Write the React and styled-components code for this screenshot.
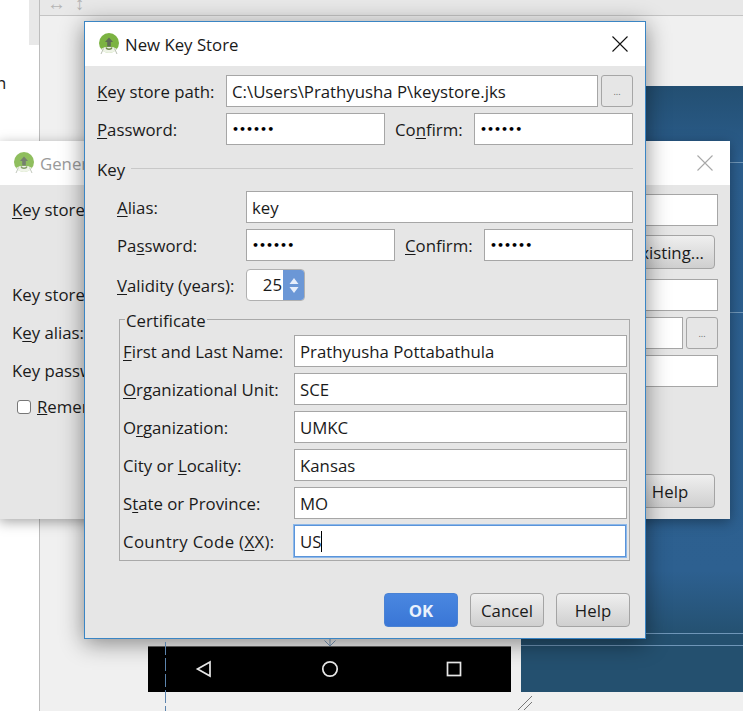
import React from 'react';
import styled, { createGlobalStyle } from 'styled-components';

const GlobalStyle = createGlobalStyle`
    html, body {
        margin: 0;
        height: 100%;
        overflow: hidden;
        background: #f0f0f0;
    }
    #root {
        height: 100%;
    }
    * {
        box-sizing: border-box;
    }
`;

const font = `"Open Sans", "Noto Sans", sans-serif`;

const StudioIcon = ({ size = 22, faded }) => (
    <svg width={size} height={size} viewBox="0 0 22 22" style={{ flex: 'none', opacity: faded ? 0.85 : 1 }}>
        <circle cx="11" cy="10" r="10" fill="#7cb342" />
        <path d="M3 16a10 10 0 0 0 16 0l-4-2H7z" fill="#eef3e6" />
        <path d="M11 4.5 15 9h-2.2v4.5H9.2V9H7z" fill="#5f6b57" />
        <path d="M8 14.5c1 2.4 5 2.4 6 0" fill="none" stroke="#6d8a4a" strokeWidth="1.6" />
        <path d="M5.5 15.5 3 21M16.5 15.5 19 21" stroke="#b9c0b2" strokeWidth="1" />
    </svg>
);

const CloseIcon = ({ color }) => (
    <svg width="16" height="16" viewBox="0 0 16 16">
        <path d="M0.5 0.5 15.5 15.5M15.5 0.5 0.5 15.5" stroke={color} strokeWidth="1.1" fill="none" />
    </svg>
);

const App = () => (
    <Page>
        <GlobalStyle />

        {/* IDE BEHIND THE DIALOGS */}
        <Ide>
            <SidePane>
                <SideScroll />
                <SideLetter>n</SideLetter>
            </SidePane>
            <Workspace>
                <Toolbar>
                    <ToolGlyph>↔</ToolGlyph>
                    <ToolGlyph>↕</ToolGlyph>
                </Toolbar>
                <Design>
                    <PhoneColumn>
                        <DashedGuide />
                        <AnchorArrow width="12" height="8" viewBox="0 0 12 8">
                            <path d="M6 0V8M0.5 2.5 6 8 11.5 2.5" stroke="#7f9dbd" strokeWidth="1" fill="none" />
                        </AnchorArrow>
                        <NavBar>
                            <svg width="18" height="18" viewBox="0 0 18 18">
                                <path d="M15 2 2.5 9 15 16z" fill="none" stroke="#e8e8e8" strokeWidth="1.7" />
                            </svg>
                            <svg width="18" height="18" viewBox="0 0 18 18">
                                <circle cx="9" cy="9" r="7.2" fill="none" stroke="#e8e8e8" strokeWidth="1.7" />
                            </svg>
                            <svg width="16" height="16" viewBox="0 0 16 16">
                                <rect x="1.5" y="1.5" width="13" height="13" fill="none" stroke="#e8e8e8" strokeWidth="1.7" />
                            </svg>
                        </NavBar>
                    </PhoneColumn>
                    <BluePanel>
                        <BlueLine $top={76} />
                        <BlueLine $top={226} />
                        <BlueLine $top={547} />
                        <BlueLine $top={559} />
                    </BluePanel>
                </Design>
                <ResizeGrip width="16" height="16" viewBox="0 0 16 16">
                    <path d="M1 15 15 1M7 15 15 7" stroke="#777" strokeWidth="1" fill="none" />
                </ResizeGrip>
            </Workspace>
        </Ide>

        {/* GENERATE SIGNED APK (BEHIND) */}
        <BackWindow>
            <TitleBar $back>
                <StudioIcon faded />
                <TitleText $muted>Generate Signed APK</TitleText>
                <CloseButton><CloseIcon color="#a8a8a8" /></CloseButton>
            </TitleBar>
            <BackBody>
                <BackRow $top={9}>
                    <BackLabel><u>K</u>ey store path:</BackLabel>
                    <Field />
                </BackRow>
                <BackButtons>
                    <PushButton $pad={10}>Choose existing...</PushButton>
                </BackButtons>
                <BackRow $top={10}>
                    <BackLabel>Key store password:</BackLabel>
                    <Field />
                </BackRow>
                <BackRow $top={6}>
                    <BackLabel>K<u>e</u>y alias:</BackLabel>
                    <Field />
                    <BrowseButton>...</BrowseButton>
                </BackRow>
                <BackRow $top={6}>
                    <BackLabel>Key password:</BackLabel>
                    <Field />
                </BackRow>
                <CheckRow>
                    <CheckBox />
                    <span><u>R</u>emember passwords</span>
                </CheckRow>
                <BackFooter>
                    <PushButton $width={90}>Help</PushButton>
                </BackFooter>
            </BackBody>
        </BackWindow>

        {/* NEW KEY STORE */}
        <FrontWindow>
            <TitleBar>
                <StudioIcon />
                <TitleText>New Key Store</TitleText>
                <CloseButton><CloseIcon color="#111" /></CloseButton>
            </TitleBar>
            <Body>
                <Row>
                    <Label $width={129}><u>K</u>ey store path:</Label>
                    <Field $grow>C:\Users\Prathyusha P\keystore.jks</Field>
                    <BrowseButton>...</BrowseButton>
                </Row>
                <Row>
                    <Label $width={129}><u>P</u>assword:</Label>
                    <Field $width={159}><Dots>••••••</Dots></Field>
                    <Label $width={79} $left={10}>Co<u>n</u>firm:</Label>
                    <Field $width={159}><Dots>••••••</Dots></Field>
                </Row>

                <SectionHead>
                    <span>Key</span>
                    <SectionRule />
                </SectionHead>

                <KeyBlock>
                    <Row>
                        <Label $width={129}><u>A</u>lias:</Label>
                        <Field $grow>key</Field>
                    </Row>
                    <Row>
                        <Label $width={129}>Pa<u>s</u>sword:</Label>
                        <Field $width={149}><Dots>••••••</Dots></Field>
                        <Label $width={79} $left={10}><u>C</u>onfirm:</Label>
                        <Field $width={149}><Dots>••••••</Dots></Field>
                    </Row>
                    <ValidityRow>
                        <Label $width={129}><u>V</u>alidity (years):</Label>
                        <Spinner>
                            <SpinnerValue>25</SpinnerValue>
                            <SpinnerArrows>
                                <svg width="10" height="17" viewBox="0 0 10 17">
                                    <path d="M5 1 9.5 7H.5zM5 16 .5 10h9z" fill="#e6eefb" />
                                </svg>
                            </SpinnerArrows>
                        </Spinner>
                    </ValidityRow>
                </KeyBlock>

                <Certificate>
                    <Legend>Certificate</Legend>
                    <CertRow>
                        <Label><u>F</u>irst and Last Name:</Label>
                        <Field>Prathyusha Pottabathula</Field>
                    </CertRow>
                    <CertRow>
                        <Label><u>O</u>rganizational Unit:</Label>
                        <Field>SCE</Field>
                    </CertRow>
                    <CertRow>
                        <Label>O<u>r</u>ganization:</Label>
                        <Field>UMKC</Field>
                    </CertRow>
                    <CertRow>
                        <Label>City or <u>L</u>ocality:</Label>
                        <Field>Kansas</Field>
                    </CertRow>
                    <CertRow>
                        <Label>S<u>t</u>ate or Province:</Label>
                        <Field>MO</Field>
                    </CertRow>
                    <CertRow>
                        <Label $spread>Country Code (<u>X</u>X):</Label>
                        <Field $focused>US<Caret /></Field>
                    </CertRow>
                </Certificate>

                <Footer>
                    <OkButton>OK</OkButton>
                    <PushButton $width={74}>Cancel</PushButton>
                    <PushButton $width={74}>Help</PushButton>
                </Footer>
            </Body>
        </FrontWindow>
    </Page>
);

const Page = styled.div`
    position: relative;
    width: 743px;
    height: 711px;
    overflow: hidden;
    font-family: ${font};
    font-size: 16.8px;
    color: #1a1a1a;
`;

/* ── IDE ── */
const Ide = styled.div`
    display: flex;
    width: 100%;
    height: 100%;
`;

const SidePane = styled.div`
    position: relative;
    width: 40px;
    flex: none;
    background: #fff;
    border-right: 1px solid #bdbdbd;
    display: flex;
    justify-content: flex-end;
`;

const SideScroll = styled.div`
    width: 10px;
    height: 45px;
    background: #e8e8e8;
`;

const SideLetter = styled.span`
    position: absolute;
    left: -4px;
    top: 71px;
`;

const Workspace = styled.div`
    position: relative;
    flex: 1;
    display: flex;
    flex-direction: column;
    background: #f0f0f0;
`;

const Toolbar = styled.div`
    height: 16px;
    flex: none;
    display: flex;
    align-items: flex-end;
    gap: 9px;
    padding: 0 0 8px 7px;
    background: #e8e8e8;
    border-bottom: 1px solid #c4c4c4;
    overflow: hidden;
`;

const ToolGlyph = styled.span`
    font-size: 19px;
    line-height: 8px;
    color: #b4b4b4;
`;

const Design = styled.div`
    display: flex;
    height: 676px;
    padding: 70px 0 0 108px;
    gap: 10px;
`;

const PhoneColumn = styled.div`
    position: relative;
    width: 363px;
    flex: none;
    display: flex;
    flex-direction: column;
    justify-content: flex-end;
`;

const DashedGuide = styled.div`
    position: absolute;
    left: 17px;
    top: 556px;
    bottom: -19px;
    width: 1px;
    z-index: 1;
    background: repeating-linear-gradient(#5d84ad 0 13px, transparent 13px 16px);
`;

const AnchorArrow = styled.svg`
    position: absolute;
    left: 176px;
    bottom: 46px;
`;

const NavBar = styled.div`
    height: 46px;
    flex: none;
    display: flex;
    align-items: center;
    justify-content: space-between;
    padding: 0 49px 1px 47px;
    background: #000;
    border-top: 1px solid #666;
`;

const BluePanel = styled.div`
    position: relative;
    flex: 1;
    background: linear-gradient(#234f72 0, #2b5d8c 12%, #2d6090 80%, #24506f 91%, #24506f 100%);
`;

const BlueLine = styled.div`
    position: absolute;
    left: 0;
    right: 0;
    top: ${(p) => p.$top}px;
    height: 1px;
    background: #6f96b8;
`;

const ResizeGrip = styled.svg`
    position: absolute;
    left: 477px;
    bottom: 0;
`;

/* ── WINDOWS ── */
const BackWindow = styled.div`
    position: absolute;
    left: -1px;
    top: 141px;
    width: 731px;
    height: 378px;
    display: flex;
    flex-direction: column;
    background: #e6e6e6;
    box-shadow: 0 3px 12px rgba(0, 0, 0, 0.35);
`;

const FrontWindow = styled.div`
    position: absolute;
    left: 84px;
    top: 21px;
    width: 562px;
    height: 618px;
    display: flex;
    flex-direction: column;
    background: #e6e6e6;
    border: 1px solid #3a85c4;
    box-shadow: 0 4px 22px rgba(0, 0, 0, 0.45);
`;

const TitleBar = styled.div`
    height: 44px;
    flex: none;
    display: flex;
    align-items: center;
    gap: 5px;
    padding-left: ${(p) => (p.$back ? 14 : 13)}px;
    background: #fff;
`;

const TitleText = styled.span`
    color: ${(p) => (p.$muted ? '#9a9a9a' : '#1a1a1a')};
`;

const CloseButton = styled.div`
    margin-left: auto;
    display: flex;
    padding-right: 17px;
`;

const Body = styled.div`
    flex: 1;
    display: flex;
    flex-direction: column;
    gap: 6px;
    padding: 9px 12px 11px 12px;
`;

const Row = styled.div`
    display: flex;
    align-items: center;
    height: 32px;
`;

const Label = styled.div`
    flex: none;
    width: ${(p) => (p.$width ? `${p.$width}px` : 'auto')};
    margin-left: ${(p) => p.$left || 0}px;
    letter-spacing: ${(p) => (p.$spread ? '0.35px' : 'normal')};
    white-space: nowrap;

    u {
        text-underline-offset: 2px;
        text-decoration-thickness: 1px;
    }
`;

const Field = styled.div`
    width: ${(p) => (p.$width ? `${p.$width}px` : 'auto')};
    flex: ${(p) => (p.$width ? 'none' : '1')};
    height: 32px;
    display: flex;
    align-items: center;
    margin-right: ${(p) => (p.$focused ? 1 : 0)}px;
    padding: 0 5px;
    background: #fff;
    border: 1px solid ${(p) => (p.$focused ? '#5a94da' : '#a6a6a6')};
    box-shadow: ${(p) => (p.$focused ? '0 0 0 1px #8eb8e8' : 'none')};
    white-space: nowrap;
    overflow: hidden;
`;

const Dots = styled.span`
    font-family: "DejaVu Sans", sans-serif;
    font-size: 11px;
    color: #000;
    font-weight: 700;
`;

const Caret = styled.span`
    width: 1px;
    height: 21px;
    background: #000;
`;

const BrowseButton = styled.div`
    width: 32px;
    height: 32px;
    flex: none;
    margin-left: 3px;
    display: flex;
    align-items: center;
    justify-content: center;
    font-size: 9px;
    color: #666;
    background: #e6e6e6;
    border: 1px solid #a6a6a6;
    border-radius: 3px;
`;

const SectionHead = styled.div`
    display: flex;
    align-items: center;
    gap: 6px;
    height: 24px;
    margin-top: 6px;
`;

const SectionRule = styled.div`
    flex: 1;
    height: 1px;
    margin-bottom: 1px;
    background: #c8c8c8;
`;

const KeyBlock = styled.div`
    display: flex;
    flex-direction: column;
    gap: 6px;
    margin-top: 4px;
    padding-left: 20px;
`;

const ValidityRow = styled(Row)`
    margin-top: 2px;
`;

const Spinner = styled.div`
    width: 59px;
    height: 32px;
    display: flex;
    background: #fff;
    border: 1px solid #b0b0b0;
    border-radius: 4px;
    overflow: hidden;
`;

const SpinnerValue = styled.div`
    flex: 1;
    text-align: right;
    line-height: 30px;
    padding-right: 1px;
`;

const SpinnerArrows = styled.div`
    width: 21px;
    display: flex;
    align-items: center;
    justify-content: center;
    background: #6b97d6;
`;

const Certificate = styled.fieldset`
    margin: 2px 3px 0 22px;
    padding: 6px 2px 2px 3px;
    height: 252px;
    border: 1px solid #a9a9a9;
    display: flex;
    flex-direction: column;
    gap: 6px;
`;

const Legend = styled.legend`
    margin-left: 2px;
    padding: 0 1px;
    line-height: 24px;
    height: 20px;
`;

const CertRow = styled.div`
    display: grid;
    grid-template-columns: 171px 1fr;
    align-items: center;
    height: 32px;
`;

const Footer = styled.div`
    display: flex;
    justify-content: flex-end;
    gap: 12px;
    margin-top: auto;
    padding-right: 3px;
`;

const PushButton = styled.div`
    width: ${(p) => (p.$width ? `${p.$width}px` : 'auto')};
    height: 34px;
    display: flex;
    align-items: center;
    justify-content: center;
    padding: 0 ${(p) => p.$pad || 0}px;
    white-space: nowrap;
    background: linear-gradient(#efefef, #cfcfcf);
    border: 1px solid #a4a4a4;
    border-radius: 4px;
`;

const OkButton = styled(PushButton)`
    width: 74px;
    color: #eaf2fc;
    font-weight: 700;
    background: linear-gradient(#4a87e0, #3a76d6);
    border-color: #4a82d4;
`;

/* ── BACK WINDOW BODY ── */
const BackBody = styled.div`
    flex: 1;
    display: flex;
    flex-direction: column;
    padding: 0 12px 11px 13px;
`;

const BackRow = styled.div`
    display: flex;
    align-items: center;
    height: 32px;
    margin-top: ${(p) => p.$top}px;
`;

const BackLabel = styled(Label)`
    width: 200px;
    padding-bottom: 2px;
`;

const BackButtons = styled.div`
    display: flex;
    justify-content: flex-end;
    margin-top: 9px;
    padding-right: 3px;
`;

const CheckRow = styled.div`
    display: flex;
    align-items: center;
    gap: 6px;
    margin-top: 8px;
    padding-left: 5px;
`;

const CheckBox = styled.div`
    width: 14px;
    height: 14px;
    background: #fff;
    border: 1px solid #777;
    border-radius: 3px;
`;

const BackFooter = styled.div`
    display: flex;
    justify-content: flex-end;
    margin-top: auto;
    padding-right: 3px;
`;

export default App;
